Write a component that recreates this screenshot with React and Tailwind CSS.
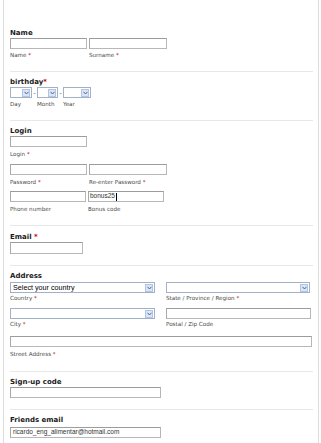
import React from "react";

const Heading = ({ children, mt }) => (
  <div className={`${mt} h-[8px] text-[7px] leading-[8px] font-bold text-[#1a1a1a] whitespace-nowrap`}>{children}</div>
);

const Req = () => <span className="text-[#c00]">*</span>;

const Label = ({ children, req, className = "" }) => (
  <div className={`h-[6px] text-[5.6px] leading-[6px] text-[#4a4a4a] whitespace-nowrap ${className}`}>
    {children}
    {req && <> <Req /></>}
  </div>
);

const Input = ({ className = "", value, caret }) => (
  <div
    className={`h-[11px] border border-[#b7b7b7] border-t-[#9c9c9c] border-l-[#a8a8a8] bg-white flex items-center pl-[1px] text-[6.5px] leading-none text-[#333] font-['Liberation_Sans',Arial,sans-serif] ${className}`}
  >
    {value}
    {caret && <span className="ml-[1px] w-px h-[8px] bg-black" />}
  </div>
);

const Arrow = () => (
  <div className="w-[8px] h-[8px] mr-[1px] border border-[#b3c3e3] bg-[#dbe5f8] flex items-center justify-center shrink-0">
    <svg width="5" height="4" viewBox="0 0 5 4">
      <path d="M0.5 0.8 L2.5 3 L4.5 0.8" fill="none" stroke="#4d6591" strokeWidth="1" />
    </svg>
  </div>
);

const Select = ({ className = "", value }) => (
  <div
    className={`h-[11px] border border-[#a3b1c6] bg-white flex items-center justify-between ${className}`}
  >
    <span className="pl-[2px] text-[7.2px] leading-none text-black font-['Liberation_Sans',Arial,sans-serif] whitespace-nowrap">
      {value}
    </span>
    <Arrow />
  </div>
);

const Divider = ({ mt }) => <div className={`${mt} h-px w-[303px] bg-[#e8e8e8]`} />;

export default function App() {
  return (
    <div className="w-[321px] h-[443px] bg-white overflow-hidden font-['DejaVu_Sans',Verdana,sans-serif]">
      <div className="ml-[3px] w-[316px] h-[443px] border-l border-r border-[#dddddd] pl-[6px] pt-[29px] flex flex-col">
        {/* Name */}
        <Heading mt="mt-0">Name</Heading>
        <div className="mt-[1px] flex gap-[2px]">
          <Input className="w-[77px]" />
          <Input className="w-[78px]" />
        </div>
        <div className="mt-[3px] flex">
          <Label req className="w-[79px]">Name</Label>
          <Label req>Surname</Label>
        </div>
        <Divider mt="mt-[13px]" />

        {/* birthday */}
        <Heading mt="mt-[6px]">
          birthday<Req />
        </Heading>
        <div className="mt-[1px] flex items-center">
          <Select className="w-[22px]" />
          <span className="w-[5px] text-center text-[6px] leading-none text-[#333]">-</span>
          <Select className="w-[21px]" />
          <span className="w-[5px] text-center text-[6px] leading-none text-[#333]">-</span>
          <Select className="w-[28px]" />
        </div>
        <div className="mt-[3px] flex">
          <Label className="w-[27px]">Day</Label>
          <Label className="w-[26px]">Month</Label>
          <Label>Year</Label>
        </div>
        <Divider mt="mt-[13px]" />

        {/* Login */}
        <Heading mt="mt-[6px]">Login</Heading>
        <Input className="mt-[1px] w-[77px]" />
        <Label req className="mt-[4px]">Login</Label>
        <div className="mt-[7px] flex gap-[2px]">
          <Input className="w-[77px]" />
          <Input className="w-[78px]" />
        </div>
        <div className="mt-[4px] flex">
          <Label req className="w-[79px]">Password</Label>
          <Label req>Re-enter Password</Label>
        </div>
        <div className="mt-[6px] flex gap-[2px]">
          <Input className="w-[76px]" />
          <Input className="w-[76px]" value="bonus25" caret />
        </div>
        <div className="mt-[4px] flex">
          <Label className="w-[78px]">Phone number</Label>
          <Label>Bonus code</Label>
        </div>
        <Divider mt="mt-[13px]" />

        {/* Email */}
        <Heading mt="mt-[7px]">
          Email <Req />
        </Heading>
        <Input className="mt-[1px] w-[73px] h-[12px]" />
        <Divider mt="mt-[11px]" />

        {/* Address */}
        <Heading mt="mt-[6px]">Address</Heading>
        <div className="mt-[2px] flex gap-[11px]">
          <Select className="w-[145px]" value="Select your country" />
          <Select className="w-[144px]" />
        </div>
        <div className="mt-[2px] flex">
          <Label req className="w-[156px]">Country</Label>
          <Label req>State / Province / Region</Label>
        </div>
        <div className="mt-[7px] flex gap-[11px]">
          <Select className="w-[145px]" />
          <Input className="w-[145px]" />
        </div>
        <div className="mt-[2px] flex">
          <Label req className="w-[156px]">City</Label>
          <Label>Postal / Zip Code</Label>
        </div>
        <Input className="mt-[9px] w-[302px]" />
        <Label req className="mt-[4px]">Street Address</Label>
        <Divider mt="mt-[14px]" />

        {/* Sign-up code */}
        <Heading mt="mt-[6px]">Sign-up code</Heading>
        <Input className="mt-[1px] w-[151px]" />
        <Divider mt="mt-[11px]" />

        {/* Friends email */}
        <Heading mt="mt-[6px]">Friends email</Heading>
        <Input className="mt-[3px] w-[151px] pl-[2px]" value="ricardo_eng_alimentar@hotmail.com" />
      </div>
    </div>
  );
}
